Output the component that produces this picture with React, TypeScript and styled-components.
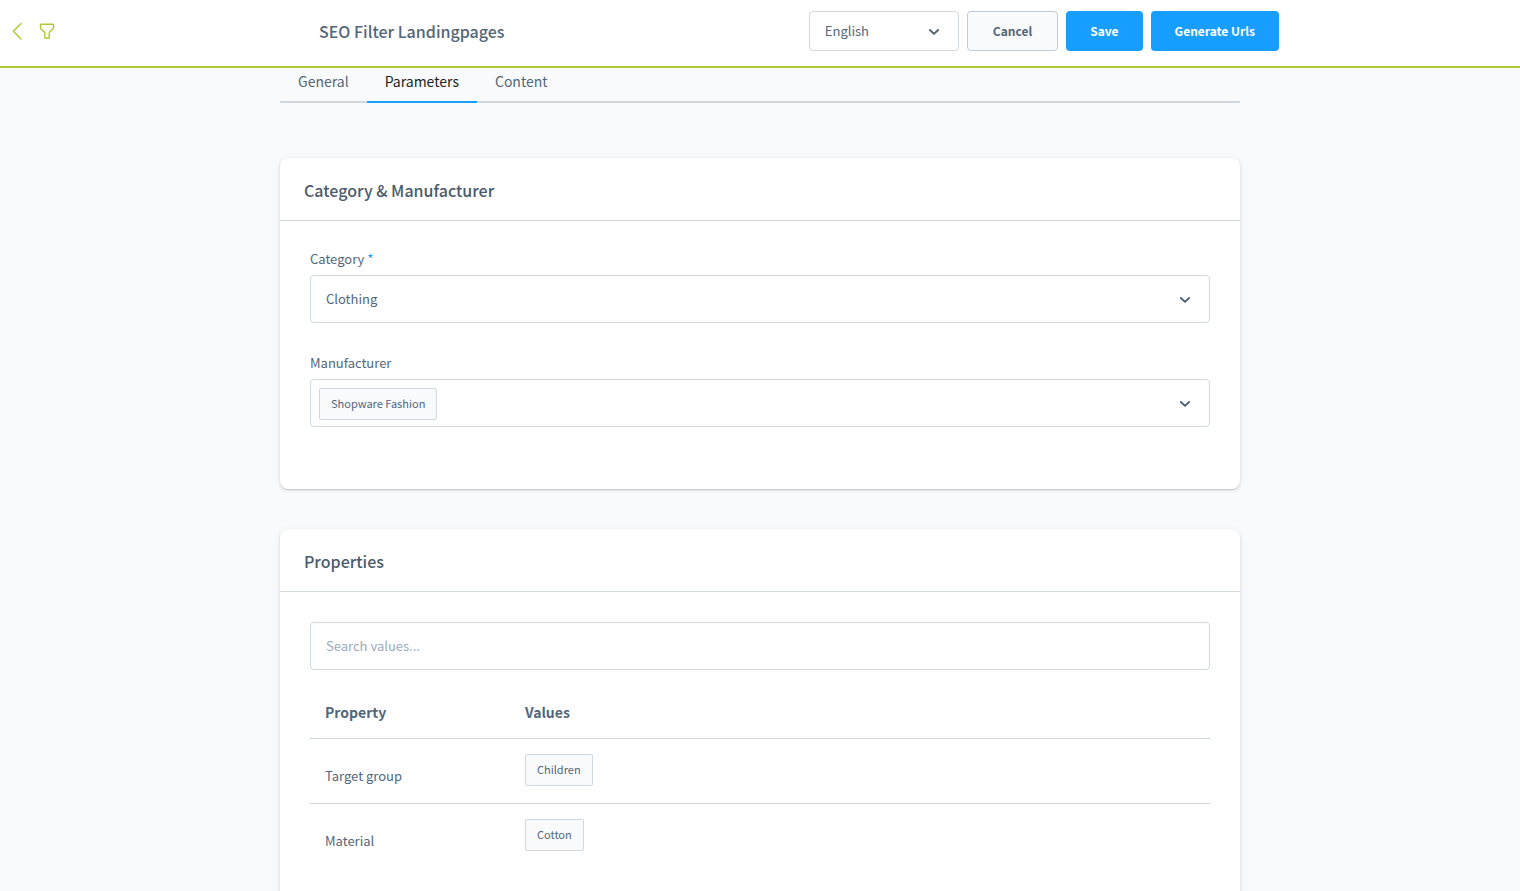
import React from "react";
import styled, { createGlobalStyle, css } from "styled-components";

const color = {
  text: "#52667a",
  heading: "#4a5b6d",
  border: "#d1d9e0",
  surface: "#f9fafc",
  primary: "#189eff",
  accent: "#aec932",
};

const GlobalStyle = createGlobalStyle`
  *, *::before, *::after { box-sizing: border-box; }
  body {
    margin: 0;
    background: ${color.surface};
    color: ${color.text};
    font-family: "Source Sans Pro", "Noto Sans CJK SC", "Open Sans", sans-serif;
    font-size: 13px;
    line-height: 20px;
  }
  button, input, select { font: inherit; color: inherit; }
`;

const Shell = styled.div`
  display: flex;
  flex-direction: column;
  height: 100vh;
`;

const SmartBar = styled.header`
  display: flex;
  flex: none;
  align-items: center;
  padding: 11px 0 15px;
  background: #fff;
  border-bottom: 2px solid ${color.accent};
`;

const ModuleNav = styled.nav`
  display: flex;
  flex: none;
  align-items: center;
  gap: 14px;
  width: 78px;
  padding-left: 8px;
  color: ${color.accent};
`;

const IconLink = styled.a`
  display: flex;
  color: inherit;
`;

const SmartBarContent = styled.div`
  display: flex;
  flex: 1;
  align-items: center;
  justify-content: space-between;
  max-width: 960px;
  margin: 0 auto;
`;

const PageTitle = styled.h1`
  margin: 0;
  font-size: 16px;
  font-weight: 500;
  line-height: 24px;
`;

const Actions = styled.div`
  display: flex;
  gap: 8px;
`;

const Button = styled.button<{ $primary?: boolean }>`
  height: 40px;
  padding: 0 25px;
  border: 1px solid #c2ccd6;
  border-radius: 4px;
  background: ${color.surface};
  font-size: 12px;
  font-weight: 700;
  cursor: pointer;
  ${(p) =>
    p.$primary &&
    css`
      padding: 0 24px;
      border: 0;
      background: ${color.primary};
      color: #fff;
    `}
`;

const SelectFrame = styled.div<{ $compact?: boolean }>`
  position: relative;
  width: ${(p) => (p.$compact ? "150px" : "100%")};
`;

const Select = styled.select<{ $compact?: boolean }>`
  display: block;
  width: 100%;
  height: ${(p) => (p.$compact ? "40px" : "48px")};
  padding: 0 40px 0 15px;
  border: 1px solid ${color.border};
  border-radius: 4px;
  background: #fff;
  appearance: none;
`;

const ChevronSlot = styled.span`
  position: absolute;
  top: 0;
  right: 17px;
  bottom: 0;
  display: flex;
  align-items: center;
  pointer-events: none;
`;

const Scroller = styled.main`
  flex: 1;
  min-height: 0;
  overflow-y: auto;
  scrollbar-width: none;
`;

const Column = styled.div`
  max-width: 960px;
  margin: 0 auto;
`;

const Tabs = styled.nav`
  display: flex;
  height: 35px;
  margin-bottom: 55px;
  border-bottom: 2px solid ${color.border};
`;

const Tab = styled.a<{ $active?: boolean }>`
  height: 35px;
  padding: 1px 18px 0;
  border-bottom: 2px solid ${(p) => (p.$active ? color.primary : "transparent")};
  color: ${(p) => (p.$active ? "#1c1f23" : color.text)};
  font-size: 14px;
  line-height: 24px;
  text-decoration: none;
`;

const Card = styled.section`
  margin-bottom: 40px;
  border-radius: 8px;
  background: #fff;
  box-shadow: 0 1px 1px rgba(0, 0, 0, 0.1), 0 1px 3px rgba(0, 0, 0, 0.12),
    0 1px 8px rgba(0, 0, 0, 0.05);
`;

const CardTitle = styled.h2`
  margin: 0;
  padding: 20px 24px 18px;
  border-bottom: 1px solid ${color.border};
  color: ${color.heading};
  font-size: 16px;
  font-weight: 500;
  line-height: 24px;
`;

const CardBody = styled.div`
  padding: 30px 30px 62px;
`;

const Fields = styled.div`
  display: grid;
  gap: 32px;
`;

const Label = styled.label`
  display: block;
  padding-bottom: 8px;
  line-height: 16px;
`;

const Required = styled.span`
  color: ${color.primary};
`;

const TagField = styled.div`
  display: flex;
  align-items: flex-start;
  gap: 8px;
  height: 48px;
  padding: 8px 40px 0 8px;
  border: 1px solid ${color.border};
  border-radius: 4px;
  background: #fff;
`;

const TagInput = styled.input`
  flex: 1;
  min-width: 0;
  height: 30px;
  border: 0;
  outline: 0;
  background: transparent;
`;

const Tag = styled.span`
  display: inline-block;
  flex: none;
  height: 32px;
  padding: 0 11px;
  border: 1px solid ${color.border};
  border-radius: 2px;
  background: ${color.surface};
  font-size: 11px;
  line-height: 28px;
  vertical-align: top;
`;

const Search = styled.input`
  display: block;
  width: 100%;
  height: 48px;
  margin-bottom: 18px;
  padding: 0 15px 2px;
  border: 1px solid ${color.border};
  border-radius: 4px;
  background: #fff;
  &::placeholder {
    color: #9aabbd;
    opacity: 1;
  }
`;

const Table = styled.table`
  width: 100%;
  border-collapse: separate;
  border-spacing: 0;
  table-layout: fixed;
`;

const HeadCell = styled.th<{ $narrow?: boolean }>`
  width: ${(p) => (p.$narrow ? "200px" : "auto")};
  padding: 12px 15px 14px;
  border-bottom: 1px solid ${color.border};
  font-size: 14px;
  font-weight: 700;
  line-height: 24px;
  text-align: left;
`;

const Row = styled.tr`
  &:not(:last-child) > td {
    border-bottom: 1px solid ${color.border};
  }
`;

const Cell = styled.td`
  height: 65px;
  padding: 15px 15px 17px;
  vertical-align: top;
`;

const NameCell = styled(Cell)`
  padding-top: 27px;
`;

const Chevron = () => (
  <svg width="16" height="16" viewBox="0 0 16 16" fill="none" stroke="currentColor" strokeWidth="2" strokeLinecap="round" strokeLinejoin="round" aria-hidden="true">
    <path d="M3.9 7 8 10.9 12.1 7" />
  </svg>
);

const properties = [
  { name: "Target group", values: ["Children"] },
  { name: "Material", values: ["Cotton"] },
];

export default function App() {
  return (
    <Shell>
      <GlobalStyle />
      <SmartBar>
        <ModuleNav aria-label="Module">
          <IconLink href="#back" aria-label="Back">
            <svg width="17" height="20" viewBox="0 0 17 20" fill="none" stroke="currentColor" strokeWidth="1.4" strokeLinecap="round" strokeLinejoin="round">
              <path d="M13 2.6 5.3 10.3 13 18" />
            </svg>
          </IconLink>
          <IconLink href="#filters" aria-label="Filters">
            <svg width="16" height="20" viewBox="0 0 16 20" fill="none" stroke="currentColor" strokeWidth="1.4" strokeLinejoin="round">
              <path d="M2.2 3.2h11.6a.7.7 0 0 1 .7.7v2.6c0 .6-.2 1-.6 1.4l-3.2 3.2c-.3.3-.5.7-.5 1.2v4.1c0 .5-.3.8-.8.8H6.6c-.5 0-.8-.3-.8-.8v-4.1c0-.5-.2-.9-.5-1.2L2.1 7.9c-.4-.4-.6-.8-.6-1.4V3.9a.7.7 0 0 1 .7-.7z" />
            </svg>
          </IconLink>
        </ModuleNav>
        <SmartBarContent>
          <PageTitle>SEO Filter Landingpages</PageTitle>
          <Actions>
            <SelectFrame $compact>
              <Select $compact aria-label="Language" defaultValue="English">
                <option>English</option>
              </Select>
              <ChevronSlot><Chevron /></ChevronSlot>
            </SelectFrame>
            <Button type="button">Cancel</Button>
            <Button type="button" $primary>Save</Button>
            <Button type="button" $primary>Generate Urls</Button>
          </Actions>
        </SmartBarContent>
      </SmartBar>

      <Scroller>
        <Column>
          <Tabs aria-label="Sections">
            <Tab href="#general">General</Tab>
            <Tab href="#parameters" $active aria-current="page">Parameters</Tab>
            <Tab href="#content">Content</Tab>
          </Tabs>

          <Card>
            <CardTitle>Category &amp; Manufacturer</CardTitle>
            <CardBody>
              <Fields>
                <div>
                  <Label htmlFor="category">
                    Category <Required>*</Required>
                  </Label>
                  <SelectFrame>
                    <Select id="category" defaultValue="Clothing">
                      <option>Clothing</option>
                    </Select>
                    <ChevronSlot><Chevron /></ChevronSlot>
                  </SelectFrame>
                </div>
                <div>
                  <Label htmlFor="manufacturer">Manufacturer</Label>
                  <SelectFrame>
                    <TagField>
                      <Tag>Shopware Fashion</Tag>
                      <TagInput id="manufacturer" type="text" />
                    </TagField>
                    <ChevronSlot><Chevron /></ChevronSlot>
                  </SelectFrame>
                </div>
              </Fields>
            </CardBody>
          </Card>

          <Card>
            <CardTitle>Properties</CardTitle>
            <CardBody>
              <Search type="text" placeholder="Search values..." aria-label="Search values" />
              <Table>
                <thead>
                  <tr>
                    <HeadCell $narrow scope="col">Property</HeadCell>
                    <HeadCell scope="col">Values</HeadCell>
                  </tr>
                </thead>
                <tbody>
                  {properties.map((property) => (
                    <Row key={property.name}>
                      <NameCell>{property.name}</NameCell>
                      <Cell>
                        {property.values.map((value) => (
                          <Tag key={value}>{value}</Tag>
                        ))}
                      </Cell>
                    </Row>
                  ))}
                </tbody>
              </Table>
            </CardBody>
          </Card>
        </Column>
      </Scroller>
    </Shell>
  );
}
